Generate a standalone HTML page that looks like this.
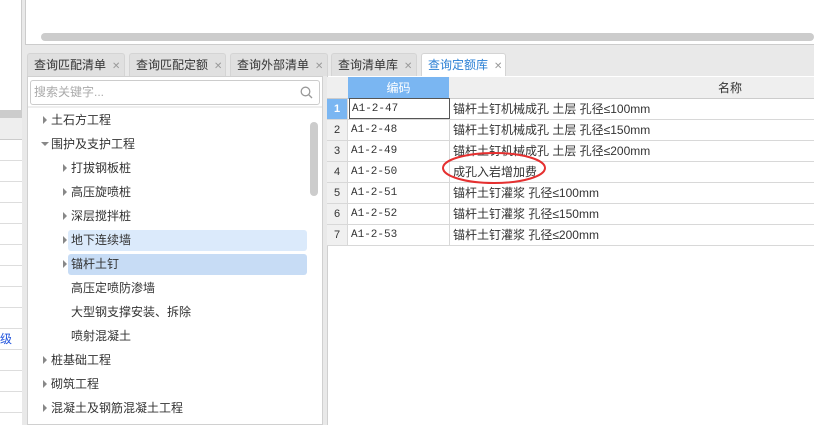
<!DOCTYPE html>
<html><head><meta charset="utf-8"><style>
*{margin:0;padding:0;box-sizing:border-box}
body{width:814px;height:425px;overflow:hidden;background:#e9e9e9;font-family:"Liberation Sans","Noto Sans CJK SC",sans-serif;font-size:12px;color:#333;position:relative}
.a{position:absolute}
.tab{position:absolute;top:53px;height:23px;background:#e0e0e0;border:1px solid #d4d4d4;border-bottom:none;border-radius:3px 3px 0 0;font-size:12px;color:#333;line-height:22px;padding-left:6px}
.tab i{font-style:normal;color:#999;font-size:10px;margin-left:6px}
.tr{position:absolute;font-size:12px;color:#333;line-height:22px;height:22px}
.tri{position:absolute;width:0;height:0;border-top:4px solid transparent;border-bottom:4px solid transparent;border-left:4px solid #888;top:7px}
.trd{position:absolute;width:0;height:0;border-left:4px solid transparent;border-right:4px solid transparent;border-top:4px solid #888;top:9px}
.row{position:absolute;left:327px;width:487px;height:21px;border-bottom:1px solid #d8d8d8;background:#fff}
.row .n{position:absolute;left:0;width:21px;height:20px;background:#f0f0f0;border-right:1px solid #d8d8d8;text-align:center;line-height:21px;font-size:11px;color:#333}
.row .c{position:absolute;left:22px;width:101px;height:20px;border-right:1px solid #d8d8d8;font-family:"Liberation Mono","Noto Sans CJK SC",monospace;font-size:11px;line-height:21px;padding-left:2px}
.row .m{position:absolute;left:124px;line-height:21px;font-size:12px;padding-left:2px;white-space:nowrap}
</style></head><body>
<div class="a" style="left:0;top:0;width:22px;height:425px;background:#fff;border-right:1px solid #ccc"></div>
<div class="a" style="left:0;top:110px;width:22px;height:8px;background:#ccc"></div>
<div class="a" style="left:0;top:118px;width:22px;height:22px;background:#eee;border-bottom:1px solid #ccc"></div>
<div class="a" style="left:0;top:140px;width:22px;height:285px;background:repeating-linear-gradient(#fff 0,#fff 20px,#ddd 20px,#ddd 21px)"></div>
<div class="a" style="left:0;top:332px;color:#2255dd;font-size:12px;line-height:14px">级</div>
<div class="a" style="left:25px;top:0;width:789px;height:45px;background:#fff;border-left:1px solid #ccc;border-bottom:1px solid #ccc"></div>
<div class="a" style="left:41px;top:33px;width:773px;height:8px;background:#ccc;border-radius:4px"></div>
<div class="tab" style="left:27px;width:98px">查询匹配清单<i>✕</i></div>
<div class="tab" style="left:129px;width:97px">查询匹配定额<i>✕</i></div>
<div class="tab" style="left:230px;width:98px">查询外部清单<i>✕</i></div>
<div class="tab" style="left:331px;width:86px">查询清单库<i>✕</i></div>
<div class="tab" style="left:421px;width:85px;background:#fff;color:#2a7fd4;height:24px">查询定额库<i>✕</i></div>
<div class="a" style="left:27px;top:76px;width:296px;height:349px;background:#fff;border:1px solid #d0d0d0"></div>
<div class="a" style="left:30px;top:80px;width:290px;height:25px;border:1px solid #ccc;border-radius:3px;background:#fff;color:#aaa;line-height:23px;padding-left:3px">搜索关键字...</div>
<svg class="a" style="left:300px;top:86px" width="13" height="13"><circle cx="5.5" cy="5.5" r="4.3" fill="none" stroke="#999" stroke-width="1.3"/><line x1="8.5" y1="8.5" x2="12" y2="12" stroke="#999" stroke-width="1.3"/></svg>
<div class="a" style="left:28px;top:106px;width:294px;height:2px;background:#eee"></div>
<div class="a" style="left:310px;top:122px;width:8px;height:74px;background:#ccc;border-radius:4px"></div>
<div class="a" style="left:68px;top:230px;width:239px;height:21px;background:#dbeafb;border-radius:3px"></div>
<div class="a" style="left:68px;top:254px;width:239px;height:21px;background:#c7dcf5;border-radius:3px"></div>
<div class="tr" style="left:42px;top:109px"><span class="tri" style="left:1px"></span><span style="margin-left:9px">土石方工程</span></div>
<div class="tr" style="left:42px;top:133px"><span class="trd" style="left:-1px"></span><span style="margin-left:9px">围护及支护工程</span></div>
<div class="tr" style="left:62px;top:157px"><span class="tri" style="left:1px"></span><span style="margin-left:9px">打拔钢板桩</span></div>
<div class="tr" style="left:62px;top:181px"><span class="tri" style="left:1px"></span><span style="margin-left:9px">高压旋喷桩</span></div>
<div class="tr" style="left:62px;top:205px"><span class="tri" style="left:1px"></span><span style="margin-left:9px">深层搅拌桩</span></div>
<div class="tr" style="left:62px;top:229px"><span class="tri" style="left:1px"></span><span style="margin-left:9px">地下连续墙</span></div>
<div class="tr" style="left:62px;top:253px"><span class="tri" style="left:1px"></span><span style="margin-left:9px">锚杆土钉</span></div>
<div class="tr" style="left:71px;top:277px">高压定喷防渗墙</div>
<div class="tr" style="left:71px;top:301px">大型钢支撑安装、拆除</div>
<div class="tr" style="left:71px;top:325px">喷射混凝土</div>
<div class="tr" style="left:42px;top:349px"><span class="tri" style="left:1px"></span><span style="margin-left:9px">桩基础工程</span></div>
<div class="tr" style="left:42px;top:373px"><span class="tri" style="left:1px"></span><span style="margin-left:9px">砌筑工程</span></div>
<div class="tr" style="left:42px;top:397px"><span class="tri" style="left:1px"></span><span style="margin-left:9px">混凝土及钢筋混凝土工程</span></div>
<div class="a" style="left:327px;top:76px;width:487px;height:349px;background:#fff;border-left:1px solid #d0d0d0"></div>
<div class="a" style="left:327px;top:77px;width:487px;height:22px;background:#efefef;border-bottom:1px solid #ccc"></div>
<div class="a" style="left:348px;top:77px;width:101px;height:22px;background:#7ab6f2;color:#fff;text-align:center;line-height:22px">编码</div>
<div class="a" style="left:718px;top:77px;line-height:22px;color:#333">名称</div>
<div class="row" style="top:99px"><div class="n" style="background:#7ab6f2;color:#fff;font-weight:bold">1</div><div class="c" style="border:1px solid #555;height:21px;top:-1px">A1-2-47</div><div class="m">锚杆土钉机械成孔 土层 孔径≤100mm</div></div>
<div class="row" style="top:120px"><div class="n">2</div><div class="c">A1-2-48</div><div class="m">锚杆土钉机械成孔 土层 孔径≤150mm</div></div>
<div class="row" style="top:141px"><div class="n">3</div><div class="c">A1-2-49</div><div class="m">锚杆土钉机械成孔 土层 孔径≤200mm</div></div>
<div class="row" style="top:162px"><div class="n">4</div><div class="c">A1-2-50</div><div class="m">成孔入岩增加费</div></div>
<div class="row" style="top:183px"><div class="n">5</div><div class="c">A1-2-51</div><div class="m">锚杆土钉灌浆 孔径≤100mm</div></div>
<div class="row" style="top:204px"><div class="n">6</div><div class="c">A1-2-52</div><div class="m">锚杆土钉灌浆 孔径≤150mm</div></div>
<div class="row" style="top:225px"><div class="n">7</div><div class="c">A1-2-53</div><div class="m">锚杆土钉灌浆 孔径≤200mm</div></div>
<svg class="a" style="left:440px;top:148px" width="110" height="40"><ellipse cx="54" cy="20" rx="51" ry="15" fill="none" stroke="#e53030" stroke-width="2"/></svg>
</body></html>
